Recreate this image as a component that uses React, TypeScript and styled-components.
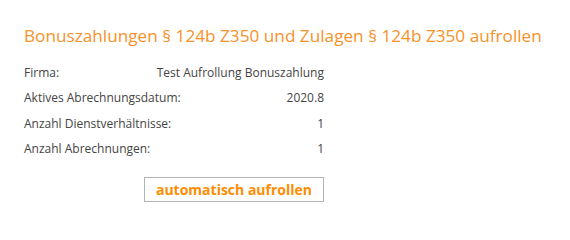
import React from "react";
import styled, { createGlobalStyle } from "styled-components";

const GlobalStyle = createGlobalStyle`
  html, body {
    margin: 0;
    padding: 0;
    background: #ffffff;
  }
  body {
    font-family: "Open Sans", "Noto Sans", sans-serif;
  }
`;

const Page = styled.div`
  padding: 24px 0 0 24px;
  width: 300px;
`;

const Title = styled.h1`
  margin: 0 0 12px;
  white-space: nowrap;
  font-size: 17.2px;
  font-weight: 400;
  line-height: 24px;
  color: #f7922a;
`;

const InfoTable = styled.div`
  display: flex;
  flex-direction: column;
`;

const Row = styled.div`
  display: flex;
  justify-content: space-between;
  align-items: center;
  height: 25.3px;
  font-size: 12px;
  color: #444444;
`;

const Actions = styled.div`
  display: flex;
  justify-content: flex-end;
  margin-top: 16px;
`;

const Button = styled.button`
  width: 180px;
  height: 25px;
  background: #ffffff;
  border: 1px solid #b4b4b4;
  font-family: "Open Sans", "Noto Sans", sans-serif;
  font-size: 14px;
  font-weight: 700;
  color: #ff8c00;
  padding: 0;
  cursor: pointer;
`;

const rows: [string, string][] = [
  ["Firma:", "Test Aufrollung Bonuszahlung"],
  ["Aktives Abrechnungsdatum:", "2020.8"],
  ["Anzahl Dienstverhältnisse:", "1"],
  ["Anzahl Abrechnungen:", "1"],
];

export default function App() {
  return (
    <>
      <GlobalStyle />
      <Page>
        <Title>Bonuszahlungen § 124b Z350 und Zulagen § 124b Z350 aufrollen</Title>
        <InfoTable>
          {rows.map(([label, value]) => (
            <Row key={label}>
              <span>{label}</span>
              <span>{value}</span>
            </Row>
          ))}
        </InfoTable>
        <Actions>
          <Button>automatisch aufrollen</Button>
        </Actions>
      </Page>
    </>
  );
}
